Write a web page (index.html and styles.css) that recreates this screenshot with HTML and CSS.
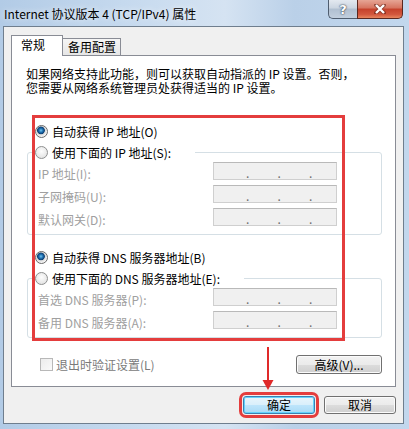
FILE: index.html
```html
<!DOCTYPE html>
<html lang="zh-CN">
<head>
    <meta charset="UTF-8">
    <meta name="viewport" content="width=device-width, initial-scale=1.0">
    <title>Internet 协议版本 4 (TCP/IPv4) 属性</title>
    <link rel="stylesheet" href="styles.css">
</head>
<body>
    <div class="window">
        <div class="titlebar">
            <span class="title">Internet 协议版本 4 (TCP/IPv4) 属性</span>
            <div class="caption">
                <span class="cap help">?</span>
                <span class="cap close">
                    <svg width="12" height="10" viewBox="0 0 12 10">
                        <path d="M2 1 L10 9 M10 1 L2 9" stroke="#5a1d14" stroke-width="4" stroke-linecap="round" opacity="0.55" fill="none"/>
                        <path d="M2 1 L10 9 M10 1 L2 9" stroke="#fff" stroke-width="2.4" fill="none"/>
                    </svg>
                </span>
            </div>
        </div>

        <div class="client">
            <div class="tabs">
                <span class="tab active">常规</span>
                <span class="tab">备用配置</span>
            </div>

            <div class="panel">
                <p class="intro">如果网络支持此功能，则可以获取自动指派的 IP 设置。否则，<br>您需要从网络系统管理员处获得适当的 IP 设置。</p>

                <label class="option"><input type="radio" name="ip" checked>自动获得 IP 地址(O)</label>
                <fieldset class="group">
                    <legend><label class="option"><input type="radio" name="ip">使用下面的 IP 地址(S):</label></legend>
                    <div class="field"><span class="field-label">IP 地址(I):</span><span class="ip"><span>.</span><span>.</span><span>.</span></span></div>
                    <div class="field"><span class="field-label">子网掩码(U):</span><span class="ip"><span>.</span><span>.</span><span>.</span></span></div>
                    <div class="field"><span class="field-label">默认网关(D):</span><span class="ip"><span>.</span><span>.</span><span>.</span></span></div>
                </fieldset>

                <label class="option dns-auto"><input type="radio" name="dns" checked>自动获得 DNS 服务器地址(B)</label>
                <fieldset class="group">
                    <legend><label class="option"><input type="radio" name="dns">使用下面的 DNS 服务器地址(E):</label></legend>
                    <div class="field"><span class="field-label">首选 DNS 服务器(P):</span><span class="ip"><span>.</span><span>.</span><span>.</span></span></div>
                    <div class="field"><span class="field-label">备用 DNS 服务器(A):</span><span class="ip"><span>.</span><span>.</span><span>.</span></span></div>
                </fieldset>

                <div class="panel-foot">
                    <label class="verify"><input type="checkbox" disabled>退出时验证设置(L)</label>
                    <button type="button" class="btn advanced">高级(V)...</button>
                </div>

                <div class="annotation"></div>
            </div>

            <div class="footer">
                <button type="button" class="btn default">确定</button>
                <button type="button" class="btn">取消</button>
            </div>

            <svg class="arrow" width="12" height="43" viewBox="0 0 12 43">
                <path d="M6 0 L6 34" stroke="#e02a2a" stroke-width="2"/>
                <polygon points="0.5,33 11.5,33 6,43" fill="#e02a2a"/>
            </svg>
        </div>
    </div>
</body>
</html>
```

FILE: styles.css
```css
body {
    margin: 0;
    font-family: "Noto Sans CJK SC", sans-serif;
    font-size: 12px;
    color: #000;
}
.window {
    width: 409px;
    height: 429px;
    box-sizing: border-box;
    padding: 0 5px 6px 3px;
    display: flex;
    flex-direction: column;
    background: linear-gradient(to right, #b2cbe6 0%, #c5d9ee 30%, #d5e3f2 55%, #bad0e8 72%, #c2d7ed 100%);
}

/* title bar */
.titlebar {
    height: 26px;
    flex-shrink: 0;
    display: flex;
    justify-content: space-between;
    align-items: flex-start;
}
.title {
    padding-left: 1px;
    line-height: 28px;
    text-shadow: 0 0 6px rgba(255, 255, 255, 0.9);
}
.caption {
    display: flex;
    margin-right: 1px;
    height: 19px;
}
.cap {
    height: 19px;
    box-sizing: border-box;
    display: flex;
    align-items: center;
    justify-content: center;
}
.help {
    width: 29px;
    border: 1px solid #4f5d6f;
    border-top: none;
    border-right: none;
    border-radius: 0 0 0 5px;
    background: linear-gradient(#e3e9f0, #cbd5e1 45%, #b0bfd0 50%, #c2cfde);
    color: #fff;
    font-family: "DejaVu Sans", sans-serif;
    font-weight: bold;
    font-size: 13px;
    text-shadow: 0 0 2px #2c3a4c, 0 0 1px #2c3a4c;
}
.close {
    width: 46px;
    border: 1px solid #5a2820;
    border-top: none;
    border-radius: 0 0 5px 0;
    background: linear-gradient(#e6a595, #d6735f 45%, #c5412b 50%, #d2573d 80%, #e8865e);
}

/* client area */
.client {
    flex: 1;
    position: relative;
    display: flex;
    flex-direction: column;
    padding: 8px 7px 0 7px;
    background: #f0f0f0;
    border: 1px solid #6f7e8e;
}
.tabs {
    display: flex;
    align-items: flex-end;
    height: 20px;
    flex-shrink: 0;
}
.tab {
    height: 17px;
    box-sizing: border-box;
    padding: 0 4px 0 5px;
    line-height: 16px;
    border: 1px solid #898c95;
    border-bottom: none;
    margin-left: -1px;
    background: linear-gradient(#f5f5f5, #e6e6e6);
}
.tab.active {
    position: relative;
    z-index: 1;
    width: 52px;
    height: 21px;
    margin-left: 0;
    margin-bottom: -1px;
    padding: 1px 0 0 9px;
    background: #fff;
}
.panel {
    flex: 1;
    position: relative;
    display: flex;
    flex-direction: column;
    padding: 0 13px 12px 15px;
    background: #fff;
    border: 1px solid #898c95;
}
.intro {
    margin: 11px 0 0 -1px;
    line-height: 14px;
}

/* radio options and group boxes */
.option {
    display: flex;
    align-items: center;
    height: 20px;
    padding-left: 8px;
}
.intro + .option {
    margin-top: 26px;
}
.dns-auto {
    margin-top: 12px;
}
.option input {
    appearance: none;
    width: 13px;
    height: 13px;
    margin: 0 4px 0 0;
    border: 1px solid #8e8f8f;
    border-radius: 50%;
    box-sizing: border-box;
    background: radial-gradient(circle at 50% 40%, #fdfdfd, #dcdcdc);
}
.option input:checked {
    border-color: #6a6a6a;
    background: radial-gradient(circle at 45% 40%, #6fc4ef 0, #1f6fb0 2px, #0d3f72 3.5px, #d9d9d9 4.2px, #f4f4f4 6px);
}
.group {
    margin: 1px 0 0;
    padding: 0 10px 3px 5px;
    min-width: 0;
    border: 1px solid #d5dfe5;
    border-radius: 3px;
}
.group legend {
    padding: 0 24px 0 2px;
}
.group legend .option {
    padding-left: 0;
}
.field {
    display: flex;
    height: 23px;
    padding-left: 5px;
}
.field-label {
    width: 175px;
    flex-shrink: 0;
    line-height: 23px;
    color: #a0a0a0;
}
.ip {
    width: 124px;
    height: 18px;
    box-sizing: border-box;
    display: grid;
    grid-template-columns: repeat(3, 31.5px);
    padding: 2px 0 0 32px;
    line-height: 16px;
    color: #6d6d6d;
    background: #f0f0f0;
    border: 1px solid #cfcfcf;
    border-top-color: #b9b9b9;
    overflow: hidden;
}

/* bottom of the tab page */
.panel-foot {
    display: flex;
    justify-content: space-between;
    align-items: center;
    margin-top: 17px;
    height: 19px;
}
.verify {
    display: flex;
    align-items: center;
    padding-left: 13px;
    color: #7a7a7a;
}
.verify input {
    appearance: none;
    width: 13px;
    height: 13px;
    margin: 0 3px 0 0;
    box-sizing: border-box;
    border: 1px solid #b8b8b8;
    background: linear-gradient(135deg, #ececec, #fafafa);
}
.btn {
    height: 19px;
    padding: 0;
    box-sizing: border-box;
    font-family: "Noto Sans CJK SC", sans-serif;
    font-size: 12px;
    line-height: 16px;
    color: #000;
    border: 1px solid #707070;
    border-radius: 3px;
    background: linear-gradient(#f2f2f2 0%, #ebebeb 50%, #dddddd 50%, #cfcfcf 100%);
    box-shadow: inset 0 0 0 1px #fbfbfb;
}
.advanced {
    width: 86px;
}
.footer {
    height: 36px;
    flex-shrink: 0;
    box-sizing: border-box;
    display: flex;
    justify-content: flex-end;
    align-items: flex-start;
    gap: 9px;
    padding-top: 9px;
}
.footer .btn {
    width: 72px;
    height: 18px;
}
.btn.default {
    border-color: #3c7fb1;
    background: linear-gradient(#e9f5fc 0%, #d9effb 50%, #bee5fb 50%, #a9daf6 100%);
    box-shadow: inset 0 0 0 1px #63d2fb;
    outline: 3px solid #e43d3d;
    outline-offset: 1px;
}

/* red annotations drawn over the dialog */
.annotation {
    position: absolute;
    left: 20px;
    top: 59px;
    width: 313px;
    height: 226px;
    box-sizing: border-box;
    border: 3px solid #e43d3d;
    pointer-events: none;
}
.arrow {
    position: absolute;
    left: 258px;
    top: 320px;
}
```
